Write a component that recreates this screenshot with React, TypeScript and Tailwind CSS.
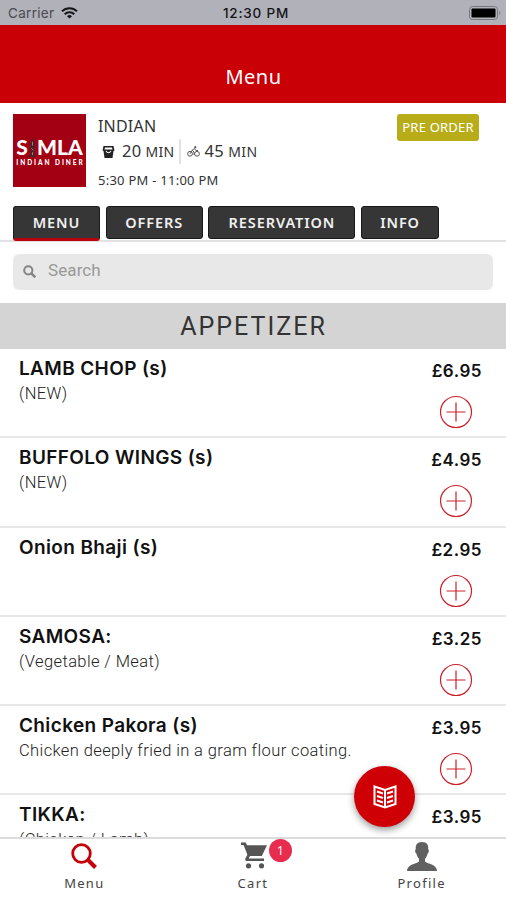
import { clsx } from 'clsx';

type Dish = { name: string; note?: string; price: string };

const dishes: Dish[] = [
  { name: 'LAMB CHOP (s)', note: '(NEW)', price: '£6.95' },
  { name: 'BUFFOLO WINGS (s)', note: '(NEW)', price: '£4.95' },
  { name: 'Onion Bhaji (s)', price: '£2.95' },
  { name: 'SAMOSA:', note: '(Vegetable / Meat)', price: '£3.25' },
  { name: 'Chicken Pakora (s)', note: 'Chicken deeply fried in a gram flour coating.', price: '£3.95' },
  { name: 'TIKKA:', note: '(Chicken / Lamb)', price: '£3.95' },
];

const tabs = [
  { label: 'MENU', width: 'w-[87px]' },
  { label: 'OFFERS', width: 'w-[97px]' },
  { label: 'RESERVATION', width: 'w-[147px]' },
  { label: 'INFO', width: 'w-[78px]' },
];

function StatusBar() {
  return (
    <div className="grid h-[25px] grid-cols-3 items-center bg-[#b1b1b9] pl-2 pr-[5px] font-['Inter',sans-serif] text-[13.5px] text-[#161619]">
      <div className="flex items-center gap-[7px] pt-px">
        <span className="tracking-[0.3px] text-[#4a4a50]">Carrier</span>
        <svg className="h-3 w-[17px]" viewBox="0 0 17 12" fill="none" stroke="#161619" strokeWidth="2">
          <path d="M1 4.3a10.7 10.7 0 0 1 15 0" />
          <path d="M3.7 7.2a6.8 6.8 0 0 1 9.6 0" />
          <path d="M8.5 11.6 6 9.2a3.6 3.6 0 0 1 5 0z" fill="#161619" stroke="none" />
        </svg>
      </div>
      <span className="whitespace-nowrap pl-[3px] pt-px text-center font-medium tracking-[0.8px]">12:30 PM</span>
      <svg className="h-[14px] w-8 justify-self-end" viewBox="0 0 32 14">
        <rect x="0.5" y="0.5" width="28" height="13" rx="3" fill="none" stroke="#77777d" />
        <rect x="2.5" y="2.5" width="24" height="9" rx="1" fill="#000" />
        <path d="M30 5v4q1.5-.5 1.5-2T30 5z" fill="#88888e" />
      </svg>
    </div>
  );
}

function Logo() {
  return (
    <div className="flex h-[73px] w-[73px] flex-col items-center bg-[#a30014] pt-[22px] text-white">
      <div className="flex items-center font-['Lato',sans-serif] text-[21px] font-black leading-[22px]">
        <span>S</span>
        <svg className="mx-px h-[21px] w-[7px]" viewBox="0 0 7 22">
          <path d="M3.5 0 4.6 4 6 7 5.2 17 7 21H0l1.8-4L1 7l1.5-3z" fill="#40252b" />
          <path d="M3.500 5v4M2.500 12l2 2M3.500 16v3" stroke="#b0a0a4" strokeWidth="0.8" />
        </svg>
        <span>MLA</span>
      </div>
      <span className="mt-px whitespace-nowrap pl-[2px] font-['Lato',sans-serif] text-[6.5px] font-black leading-[8px] tracking-[1.95px]">
        INDIAN DINER
      </span>
    </div>
  );
}

function Restaurant() {
  return (
    <div className="flex h-[103px] px-[13px] pt-[11px] font-['Noto_Sans',sans-serif] text-[#333]">
      <Logo />
      <div className="ml-3 flex-1">
        <div className="text-[16px] leading-[24px] tracking-[0.2px]">INDIAN</div>
        <div className="flex h-[27px] items-center text-[14px]">
          <svg className="ml-[4px] h-[13px] w-[13px]" viewBox="0 0 13 13">
            <path d="M1.500 1h10l1 4.500-1 .5-1 7h-8l-1-7-1-.5z" fill="#222" />
            <path d="M3 2.500h7l.5 2h-8z" fill="#fff" />
            <path d="M4 6q2.500 3.500 5 0" fill="none" stroke="#fff" strokeWidth="1.1" />
          </svg>
          <span className="ml-[7px] tracking-[0.3px]">
            <span className="text-[16.5px]">20</span> MIN
          </span>
          <span className="ml-[5px] h-[25px] w-[2px] bg-[#e2e2e2]" />
          <svg className="ml-[6px] h-[11px] w-[13px]" viewBox="0 0 13 11" fill="none" stroke="#555" strokeWidth="1">
            <circle cx="3" cy="7.8" r="2.4" />
            <circle cx="10" cy="7.8" r="2.4" />
            <path d="M3 7.8 5.2 4.2 7 6v3M5.2 4.2 7.500 2.500 9 4.500h2" />
            <circle cx="8.3" cy="1.2" r="0.7" fill="#555" />
          </svg>
          <span className="ml-[4px] tracking-[0.4px]">
            <span className="text-[16.5px]">45</span> MIN
          </span>
        </div>
        <div className="pt-[5px] text-[13px] leading-[20px] tracking-[0.25px]">5:30 PM - 11:00 PM</div>
      </div>
      <div className="mr-[14px] flex h-[27px] w-[82px] items-center justify-center whitespace-nowrap rounded-[3px] bg-[#b8ad18] text-[13px] tracking-[0.2px] text-white">
        PRE ORDER
      </div>
    </div>
  );
}

function Tabs() {
  return (
    <div className="flex h-[36px] gap-[5.7px] border-b-2 border-[#e2e2e2] px-[13px] font-['Noto_Sans',sans-serif] text-[14.5px] font-semibold tracking-[0.9px] text-[#f0f0f0]">
      {tabs.map((tab, i) => (
        <div
          key={tab.label}
          className={clsx(
            'flex shrink-0 items-center justify-center rounded-[3px] border bg-[#363636]',
            tab.width,
            i === 0 ? 'h-[35px] border-x-[#1c1c1c] border-t-[#1c1c1c] border-b-[3px] border-b-[#b8050d]' : 'h-[33px] border-[#181818]',
          )}
        >
          {tab.label}
        </div>
      ))}
    </div>
  );
}

function AddButton() {
  return (
    <button type="button" aria-label="Add">
      <svg className="h-[34px] w-[34px]" viewBox="0 0 34 34" fill="none" stroke="#c9222b" strokeWidth="1.2">
        <circle cx="17" cy="17" r="15.5" />
        <path d="M17 7.500v19M7.500 17h19" />
      </svg>
    </button>
  );
}

function DishRow({ name, note, price }: Dish) {
  return (
    <div className="flex h-[89.3px] shrink-0 justify-between border-b-2 border-[#e8e8e8] pl-[19px] pr-[24px]">
      <div>
        <div className="pt-[7px] font-['Inter',sans-serif] text-[19px] font-semibold leading-[25px] tracking-[0.37px] text-[#111]">{name}</div>
        {note && (
          <div className="pt-[2px] font-['Roboto',sans-serif] text-[16.5px] font-light leading-[22px] tracking-[0.39px] text-[#222]">{note}</div>
        )}
      </div>
      <div className="flex flex-col items-end">
        <div className="pt-[12px] font-['Inter',sans-serif] text-[17px] font-semibold leading-[20px] tracking-[0.5px] text-[#111]">{price}</div>
        <div className="mr-[9px] mt-[14px] h-[34px]">
          <AddButton />
        </div>
      </div>
    </div>
  );
}

function BottomNav() {
  return (
    <nav className="grid h-[63px] grid-cols-3 border-t-2 border-[#dcdcdc] bg-white font-['Noto_Sans',sans-serif] text-[13px] tracking-[1.3px] text-[#444]">
      <div className="flex flex-col items-center pt-[4px]">
        <svg className="h-[26px] w-[26px]" viewBox="0 0 26 26" fill="none" stroke="#c50008">
          <circle cx="10.5" cy="10.5" r="8.8" strokeWidth="2.8" />
          <path d="m16.500 16.500 8 8" strokeWidth="4" />
        </svg>
        <span className="mt-[5px] leading-[18px]">Menu</span>
      </div>
      <div className="flex flex-col items-center pt-[3px]">
        <div className="relative ml-[3px]">
          <svg className="h-[27px] w-[27px]" viewBox="0 0 27 27" fill="#555">
            <path d="M0 .5h4.700L6 3.200h20L20.800 14H9l-1.400 2.500H23V19H5.500q-2-.5-1-2.700l1.900-3.500L2.600 3H0z" />
            <circle cx="7.5" cy="23.8" r="2.6" />
            <circle cx="20.5" cy="23.8" r="2.6" />
          </svg>
          <span className="absolute -top-[3px] left-[28px] flex h-[23px] w-[23px] items-center justify-center rounded-full bg-[#e82c4e] text-[12px] tracking-normal text-white">
            1
          </span>
        </div>
        <span className="mt-[5px] leading-[18px]">Cart</span>
      </div>
      <div className="flex flex-col items-center pt-[3px]">
        <svg className="h-[29px] w-[30px]" viewBox="0 0 30 29" fill="#606060">
          <path d="M15 0c5 0 6.800 3 6.200 7.500 1.200.2.700 3.200-.7 4.200-.4 2.600-1.500 4-2.500 5v2.800c2 2.500 12 2.500 12 9.500H0c0-7 10-7 12-9.500v-2.800c-1-1-2.100-2.400-2.500-5-1.400-1-1.900-4-.7-4.200C8.200 3 10 0 15 0z" />
        </svg>
        <span className="mt-[3px] leading-[18px]">Profile</span>
      </div>
    </nav>
  );
}

export default function App() {
  return (
    <div className="relative flex h-[900px] w-[506px] flex-col overflow-hidden bg-white">
      <StatusBar />
      <header className="flex h-[78px] items-end justify-center bg-[#c90006] pb-[11px] pl-px font-['Noto_Sans',sans-serif] text-[20px] leading-[30px] tracking-[0.5px] text-white">
        Menu
      </header>
      <Restaurant />
      <Tabs />
      <div className="h-[61px] px-[13px] pt-[12px]">
        <div className="flex h-[36px] items-center rounded-[6px] bg-[#e8e8e8] pl-[10px] font-['Roboto',sans-serif] text-[17px] tracking-[0.1px] text-[#999]">
          <svg className="-mt-[2px] mr-[12px] h-[13px] w-[13px]" viewBox="0 0 13 13" fill="none" stroke="#858585">
            <circle cx="5.3" cy="5.3" r="4.1" strokeWidth="2" />
            <path d="m8.300 8.300 4 4" strokeWidth="2.5" />
          </svg>
          <span className="-mt-[3px]">Search</span>
        </div>
      </div>
      <div className="flex h-[46px] items-center justify-center bg-[#d4d4d4] pl-px pt-px font-['Roboto',sans-serif] text-[25px] tracking-[2px] text-[#333]">
        APPETIZER
      </div>
      <main className="flex min-h-0 flex-1 flex-col overflow-hidden">
        {dishes.map((dish) => (
          <DishRow key={dish.name} {...dish} />
        ))}
      </main>
      <BottomNav />

      {/* Floating category button */}
      <button
        type="button"
        aria-label="Categories"
        className="absolute bottom-[73px] right-[91px] flex h-[61px] w-[61px] items-center justify-center rounded-full bg-[#ce0006] shadow-[0_3px_7px_rgba(0,0,0,0.4)]"
      >
        <svg className="h-[25px] w-[24px]" viewBox="0 0 24 25" fill="none" stroke="#fff" strokeWidth="2">
          <path d="M1.500 2.500 12 6l10.500-3.500V20L12 23.500 1.500 20zM12 6v17" />
          <path d="m4 7.500 6 2M4 12l6 2M4 16.500l6 2M20 7.500l-6 2M20 12l-6 2M20 16.500l-6 2" />
        </svg>
      </button>
    </div>
  );
}
